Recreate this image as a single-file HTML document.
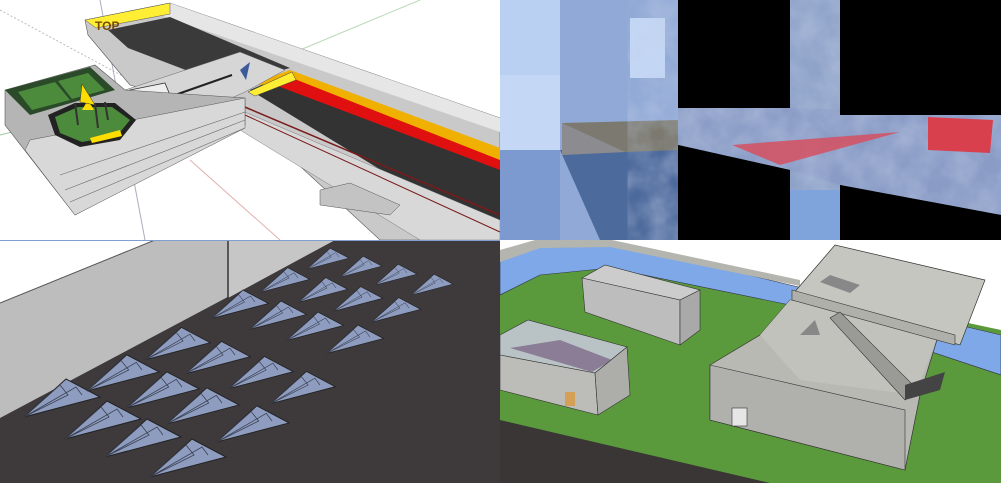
<!DOCTYPE html>
<html><head><meta charset="utf-8"><style>
html,body{margin:0;padding:0;background:#fff;width:1001px;height:483px;overflow:hidden}
svg{display:block}
</style></head><body>
<svg width="1001" height="483" viewBox="0 0 1001 483" xmlns="http://www.w3.org/2000/svg">
<defs>
<filter id="cl"><feTurbulence type="fractalNoise" baseFrequency="0.04" numOctaves="3" seed="3"/><feColorMatrix values="0 0 0 0 0.55  0 0 0 0 0.62  0 0 0 0 0.8  0 0 0 1.2 -0.3"/></filter>
<clipPath id="tr"><rect x="500" y="0" width="501" height="240"/></clipPath>
<clipPath id="bl"><rect x="0" y="240" width="500" height="243"/></clipPath>
<clipPath id="br"><rect x="500" y="240" width="501" height="243"/></clipPath>
<g id="pl"><polygon points="-38,22 4,-16 38,2" fill="#8e9cc0" stroke="#222" stroke-width="1"/><polyline points="-38,22 -2,-10 6,0 -38,22 14,-8 20,0" fill="none" stroke="#3a4050" stroke-width="0.8"/></g>
</defs>

<!-- TOP LEFT -->
<rect x="0" y="0" width="500" height="240" fill="#fff"/>
<line x1="0" y1="10" x2="130" y2="80" stroke="#bbb" stroke-dasharray="2,2"/>
<line x1="300" y1="50" x2="420" y2="0" stroke="#b9d9b9"/>
<line x1="100" y1="0" x2="145" y2="240" stroke="#aab"/>
<line x1="190" y1="160" x2="280" y2="240" stroke="#e0b0b0"/>
<line x1="0" y1="135" x2="20" y2="130" stroke="#9c9"/>
<!-- long strip -->
<polygon points="85,20 170,3 500,118 500,240 380,240 250,120 130,85 88,35" fill="#c9c9c9" stroke="#555" stroke-width="0.6"/>
<polygon points="170,3 500,118 500,132 160,15" fill="#e6e6e6"/>
<polygon points="85,20 170,3 170,14 96,28" fill="#ffee33" stroke="#555" stroke-width="0.5"/>
<text x="95" y="30" font-family="Liberation Sans,sans-serif" font-size="12" font-weight="bold" fill="#7a4a00">TOP</text>
<polygon points="108,30 170,17 290,68 225,85 128,48" fill="#3a3a3a"/>
<polygon points="250,90 290,72 500,150 500,222 430,200" fill="#333"/>
<polygon points="250,85 290,70 500,148 500,165 290,84" fill="#f0b000"/>
<polygon points="275,85 292,78 500,160 500,170" fill="#e01010"/>
<polygon points="248,92 292,72 296,80 255,96" fill="#ffee33" stroke="#444" stroke-width="0.5"/>
<polygon points="240,110 500,220 500,240 420,240 240,130" fill="#d8d8d8" stroke="#666" stroke-width="0.4"/>
<line x1="240" y1="105" x2="500" y2="215" stroke="#7a1a1a" stroke-width="1.5"/>
<line x1="245" y1="115" x2="500" y2="232" stroke="#7a1a1a" stroke-width="1"/>
<polygon points="320,190 350,183 400,205 390,215 320,205" fill="#c3c3c3" stroke="#555" stroke-width="0.5"/>
<!-- cross platform -->
<polygon points="125,90 240,52 285,70 245,92 170,125 130,105" fill="#d6d6d6" stroke="#666" stroke-width="0.5"/>
<line x1="175" y1="95" x2="232" y2="75" stroke="#222" stroke-width="2"/>
<line x1="160" y1="108" x2="205" y2="142" stroke="#222" stroke-width="2.5"/>
<polygon points="130,90 165,83 172,100 142,118 130,112" fill="#eee" stroke="#333" stroke-width="0.8"/>
<rect x="155" y="104" width="10" height="10" fill="#333"/>
<polygon points="240,70 250,62 246,80" fill="#3a5a9a"/>
<!-- left base -->
<polygon points="5,90 95,65 125,90 245,98 245,125 75,215 5,125" fill="#b5b5b5" stroke="#555" stroke-width="0.6"/>
<polygon points="30,140 245,98 245,128 75,215 25,150" fill="#d8d8d8" stroke="#555" stroke-width="0.5"/>
<line x1="60" y1="175" x2="245" y2="112" stroke="#666" stroke-width="0.6"/>
<line x1="65" y1="190" x2="245" y2="120" stroke="#666" stroke-width="0.6"/>
<line x1="70" y1="202" x2="245" y2="128" stroke="#666" stroke-width="0.6"/>
<polygon points="5,90 90,67 115,90 30,115" fill="#2a4a2a"/>
<polygon points="18,92 55,82 70,100 32,110" fill="#4c8a3c"/>
<polygon points="58,81 88,73 105,90 72,99" fill="#4c8a3c"/>
<polygon points="48,115 75,103 115,103 136,120 120,140 80,147 55,135" fill="#222"/>
<polygon points="55,117 78,107 112,107 130,120 117,136 82,142 60,133" fill="#4c8a3c"/>
<polygon points="88,100 82,110 94,110" fill="#ffdd00"/>
<polygon points="82,84 80,102 95,105" fill="#ffdd00" stroke="#333" stroke-width="0.5"/>
<line x1="75" y1="103" x2="78" y2="125" stroke="#333" stroke-width="2"/>
<line x1="95" y1="103" x2="98" y2="128" stroke="#333" stroke-width="2"/>
<line x1="105" y1="102" x2="108" y2="120" stroke="#333" stroke-width="2"/>
<polygon points="90,138 120,130 122,136 92,143" fill="#ffdd00"/>
<!-- bottom left -->
<g clip-path="url(#bl)">
<rect x="0" y="240" width="500" height="243" fill="#3e3a3b"/>
<polygon points="0,240 155,240 0,303" fill="#fff"/>
<polygon points="0,303 155,240 335,240 0,418" fill="#bdbdbd"/>
<polygon points="228,240 335,240 228,298" fill="#c6c6c6"/>
<line x1="0" y1="303" x2="155" y2="240" stroke="#555"/>
<line x1="228" y1="240" x2="228" y2="298" stroke="#111" stroke-width="1.2"/>
<line x1="0" y1="240" x2="500" y2="240" stroke="#7f9fd0" stroke-width="2"/>
<use href="#pl" transform="translate(62,395)"/>
<use href="#pl" transform="translate(103,417)"/>
<use href="#pl" transform="translate(143,435)"/>
<use href="#pl" transform="translate(188,455)"/>
<use href="#pl" transform="translate(123,370) scale(0.95)"/>
<use href="#pl" transform="translate(163,387) scale(0.95)"/>
<use href="#pl" transform="translate(203,403) scale(0.95)"/>
<use href="#pl" transform="translate(253,421) scale(0.95)"/>
<use href="#pl" transform="translate(178,341) scale(0.85)"/>
<use href="#pl" transform="translate(218,355) scale(0.85)"/>
<use href="#pl" transform="translate(261,370) scale(0.85)"/>
<use href="#pl" transform="translate(303,385) scale(0.85)"/>
<use href="#pl" transform="translate(240,302) scale(0.75)"/>
<use href="#pl" transform="translate(278,313) scale(0.75)"/>
<use href="#pl" transform="translate(315,324) scale(0.75)"/>
<use href="#pl" transform="translate(355,337) scale(0.75)"/>
<use href="#pl" transform="translate(285,278) scale(0.65)"/>
<use href="#pl" transform="translate(323,288) scale(0.65)"/>
<use href="#pl" transform="translate(358,297) scale(0.65)"/>
<use href="#pl" transform="translate(396,308) scale(0.65)"/>
<use href="#pl" transform="translate(328,257) scale(0.55)"/>
<use href="#pl" transform="translate(361,265) scale(0.55)"/>
<use href="#pl" transform="translate(396,273) scale(0.55)"/>
<use href="#pl" transform="translate(432,283) scale(0.55)"/>
</g>
<!-- TOP RIGHT -->
<g clip-path="url(#tr)">
<rect x="500" y="0" width="501" height="240" fill="#000"/>
<rect x="500" y="0" width="60" height="240" fill="#b9d0f2"/>
<rect x="500" y="75" width="60" height="75" fill="#c4d8f6"/>
<rect x="500" y="150" width="60" height="90" fill="#7c9ad0"/>
<rect x="560" y="0" width="118" height="240" fill="#90a9d6"/>
<rect x="630" y="18" width="35" height="60" fill="#c3d7f5"/>
<rect x="630" y="150" width="48" height="25" fill="#c9dbf5"/>
<polygon points="560,150 678,150 678,240 600,240" fill="#4d6a9c"/>
<polygon points="562,123 678,120 678,150 625,152 562,155" fill="#7c7a70"/>
<polygon points="562,123 625,152 562,155" fill="#8c8c90"/>
<rect x="790" y="0" width="50" height="240" fill="#8fa3c9"/>
<polygon points="678,108 790,108 1001,115 1001,215 840,185 790,170 678,145" fill="#8a9cc6"/>
<rect x="678" y="0" width="501" height="240" filter="url(#cl)" opacity="0.55" clip-path="url(#tr)"/>
<rect x="678" y="0" width="112" height="108" fill="#000"/>
<rect x="840" y="0" width="161" height="115" fill="#000"/>
<polygon points="678,145 790,170 790,230 678,240" fill="#000"/>
<polygon points="840,185 1001,215 1001,240 840,240" fill="#000"/>
<polygon points="680,150 790,175 790,240 680,240" fill="#000"/>
<rect x="790" y="190" width="50" height="50" fill="#7fa3db"/>
<polygon points="732,145 900,132 780,165" fill="#d65060" opacity="0.85"/>
<polygon points="928,117 993,120 990,153 928,150" fill="#d8404e"/>
</g>
<!-- BOTTOM RIGHT -->
<g clip-path="url(#br)">
<rect x="500" y="240" width="501" height="243" fill="#fff"/>
<polygon points="500,270 540,250 610,245 790,285 1001,330 1001,483 500,483" fill="#5b9a3c"/>
<polygon points="500,255 535,243 612,242 790,285 1001,335 1001,375 790,305 610,268 540,275 500,295" fill="#7ea8e8" stroke="#334" stroke-width="0.6"/>
<polygon points="500,250 535,240 612,240 800,280 800,286 610,247 540,248 500,262" fill="#b5b5b0"/>
<polygon points="500,420 770,483 500,483" fill="#3a3636"/>
<polygon points="582,278 605,265 700,290 680,300" fill="#ccc" stroke="#333" stroke-width="0.6"/>
<polygon points="582,278 680,300 680,345 585,312" fill="#bdbdbd" stroke="#333" stroke-width="0.6"/>
<polygon points="680,300 700,290 700,330 680,345" fill="#a9a9a9" stroke="#333" stroke-width="0.6"/>
<polygon points="500,335 528,320 627,347 595,373 500,355" fill="#b9c3c6" stroke="#333" stroke-width="0.6"/>
<polygon points="510,348 560,340 612,360 592,372" fill="#8a7d95"/>
<polygon points="500,355 595,373 598,415 500,390" fill="#bcbcb8" stroke="#333" stroke-width="0.6"/>
<polygon points="595,373 627,347 630,395 598,415" fill="#adadaa" stroke="#333" stroke-width="0.6"/>
<rect x="565" y="392" width="10" height="14" fill="#d4a058"/>
<polygon points="710,365 760,335 790,300 940,330 920,395 905,470 710,420" fill="#b8b9b3" stroke="#333" stroke-width="0.7"/>
<polygon points="710,365 905,410 905,470 710,420" fill="#b0b1ac" stroke="#333" stroke-width="0.6"/>
<polygon points="760,335 790,300 940,330 915,395 800,380" fill="#c1c2bc"/>
<rect x="732" y="408" width="15" height="18" fill="#e6e6e6" stroke="#333" stroke-width="0.6"/>
<polygon points="792,295 835,245 985,280 960,345" fill="#c5c6c0" stroke="#333" stroke-width="0.7"/>
<polygon points="792,290 955,335 955,345 792,300" fill="#b0b0ab" stroke="#333" stroke-width="0.6"/>
<polygon points="820,282 830,275 860,285 850,293" fill="#888" />
<polygon points="830,318 840,312 918,390 905,400" fill="#9a9b96" stroke="#333" stroke-width="0.6"/>
<polygon points="905,385 945,372 940,390 905,400" fill="#444"/>
<polygon points="800,335 815,320 820,335" fill="#888"/>
</g>
</svg>
</body></html>
